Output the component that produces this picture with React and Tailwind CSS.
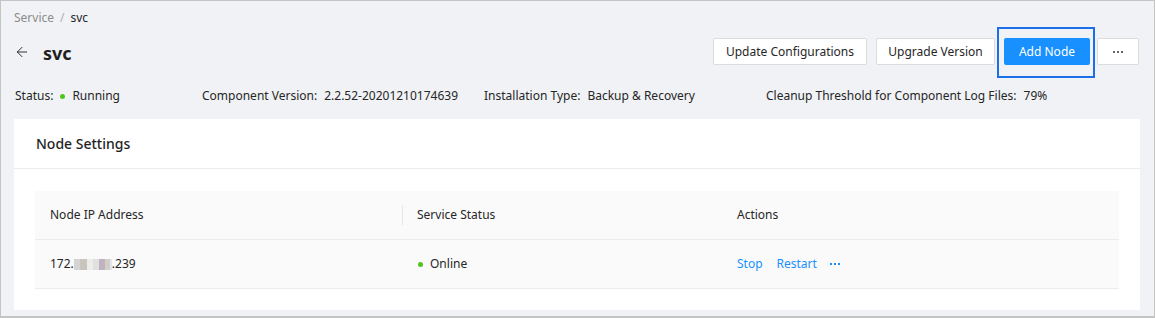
import React from 'react';
import { ArrowLeft } from 'lucide-react';

const infoItems = [
  { label: 'Status', value: 'Running', dot: true, width: 'w-[187px]' },
  { label: 'Component Version', value: '2.2.52-20201210174639', width: 'w-[282px]' },
  { label: 'Installation Type', value: 'Backup & Recovery', width: 'w-[282px]' },
  { label: 'Cleanup Threshold for Component Log Files', value: '79%', width: '' },
];

const Dots = ({ className }) => (
  <span className={`inline-flex items-center gap-[2px] ${className}`}>
    <span className="w-[2px] h-[2px] bg-current" />
    <span className="w-[2px] h-[2px] bg-current" />
    <span className="w-[2px] h-[2px] bg-current" />
  </span>
);

const App = () => {
  return (
    <div
      className="w-[1155px] h-[318px] overflow-hidden border border-b-2 border-[#c4c4c4] bg-[#f0f2f5] px-[13px] text-[12px] text-[#262626]"
      style={{ fontFamily: '"Noto Sans", "Open Sans", sans-serif' }}
    >
      {/* Breadcrumb */}
      <div className="pt-[7px] h-[27px] leading-[20px] flex items-center gap-[6px]">
        <span className="text-[#8c8c8c]">Service</span>
        <span className="text-[#b0b0b0]">/</span>
        <span>svc</span>
      </div>

      {/* Header */}
      <div className="mt-[10px] h-[27px] flex items-center justify-between">
        <div className="flex items-center">
          <ArrowLeft className="w-[16px] h-[16px] mt-[1px] text-[#333]" strokeWidth={1.5} />
          <span className="ml-[13px] mt-[3px] text-[18px] font-bold text-[#1f1f1f]">svc</span>
        </div>
        <div className="flex items-center mr-[2px]">
          <button className="h-[27px] w-[154px] bg-white border border-[#dcdcdc] rounded-[2px] text-[12px]">
            Update Configurations
          </button>
          <button className="ml-[9px] h-[27px] w-[119px] bg-white border border-[#dcdcdc] rounded-[2px] text-[12px]">
            Upgrade Version
          </button>
          <div className="relative ml-[9px]">
            <button className="h-[27px] w-[86px] bg-[#1890ff] text-white rounded-[2px] text-[12px]">
              Add Node
            </button>
            <div className="absolute -left-[7px] -right-[5px] -top-[11px] -bottom-[13px] border-2 border-[#1c6fe8]" />
          </div>
          <button className="ml-[7px] h-[27px] w-[42px] bg-white border border-[#dcdcdc] rounded-[2px] flex items-center justify-center">
            <Dots className="text-[#666]" />
          </button>
        </div>
      </div>

      {/* Info row */}
      <div className="mt-[21px] h-[20px] leading-[20px] flex items-center pl-[1px]">
        {infoItems.map((item) => (
          <div key={item.label} className={`${item.width} flex items-center whitespace-nowrap`}>
            <span>{item.label}:</span>
            {item.dot && <span className="ml-[7px] w-[5px] h-[5px] rounded-full bg-[#52c41a]" />}
            <span className="ml-[7px]">{item.value}</span>
          </div>
        ))}
      </div>

      {/* Card */}
      <div className="mt-[13px] w-[1126px] bg-white">
        <div className="h-[50px] pl-[22px] flex items-center border-b border-[#ececec] text-[14px] font-medium text-[#1f1f1f]">
          Node Settings
        </div>
        <div className="px-[21px] pt-[22px] pb-[21px]">
          <div className="bg-[#fafafa]">
            <div className="h-[49px] grid grid-cols-[367px_320px_1fr] items-center border-b border-[#ececec] text-[#262626]">
              <div className="pl-[15px]">Node IP Address</div>
              <div className="relative pl-[15px]">
                <span className="absolute left-0 top-1/2 -translate-y-1/2 w-px h-[20px] bg-[#e6e6e6]" />
                Service Status
              </div>
              <div className="pl-[15px]">Actions</div>
            </div>
            <div className="h-[49px] grid grid-cols-[367px_320px_1fr] items-center border-b border-[#ececec]">
              <div className="pl-[15px] flex items-center">
                <span>172.</span>
                <span className="flex h-[11px]">
                  <span className="w-[6px] bg-[#d4d4d4]" />
                  <span className="w-[7px] bg-[#c9c5bd]" />
                  <span className="w-[6px] bg-[#ececec]" />
                  <span className="w-[6px] bg-[#e2e0dc]" />
                  <span className="w-[6px] bg-[#bdb3c3]" />
                  <span className="w-[5px] bg-[#d6cec2]" />
                  <span className="w-[2px] bg-[#dce6f5]" />
                </span>
                <span>.239</span>
              </div>
              <div className="pl-[16px] flex items-center">
                <span className="w-[5px] h-[5px] rounded-full bg-[#52c41a]" />
                <span className="ml-[7px]">Online</span>
              </div>
              <div className="pl-[15px] flex items-center text-[#1890ff]">
                <span>Stop</span>
                <span className="ml-[14px]">Restart</span>
                <Dots className="ml-[13px]" />
              </div>
            </div>
          </div>
        </div>
      </div>
    </div>
  );
};

export default App;
